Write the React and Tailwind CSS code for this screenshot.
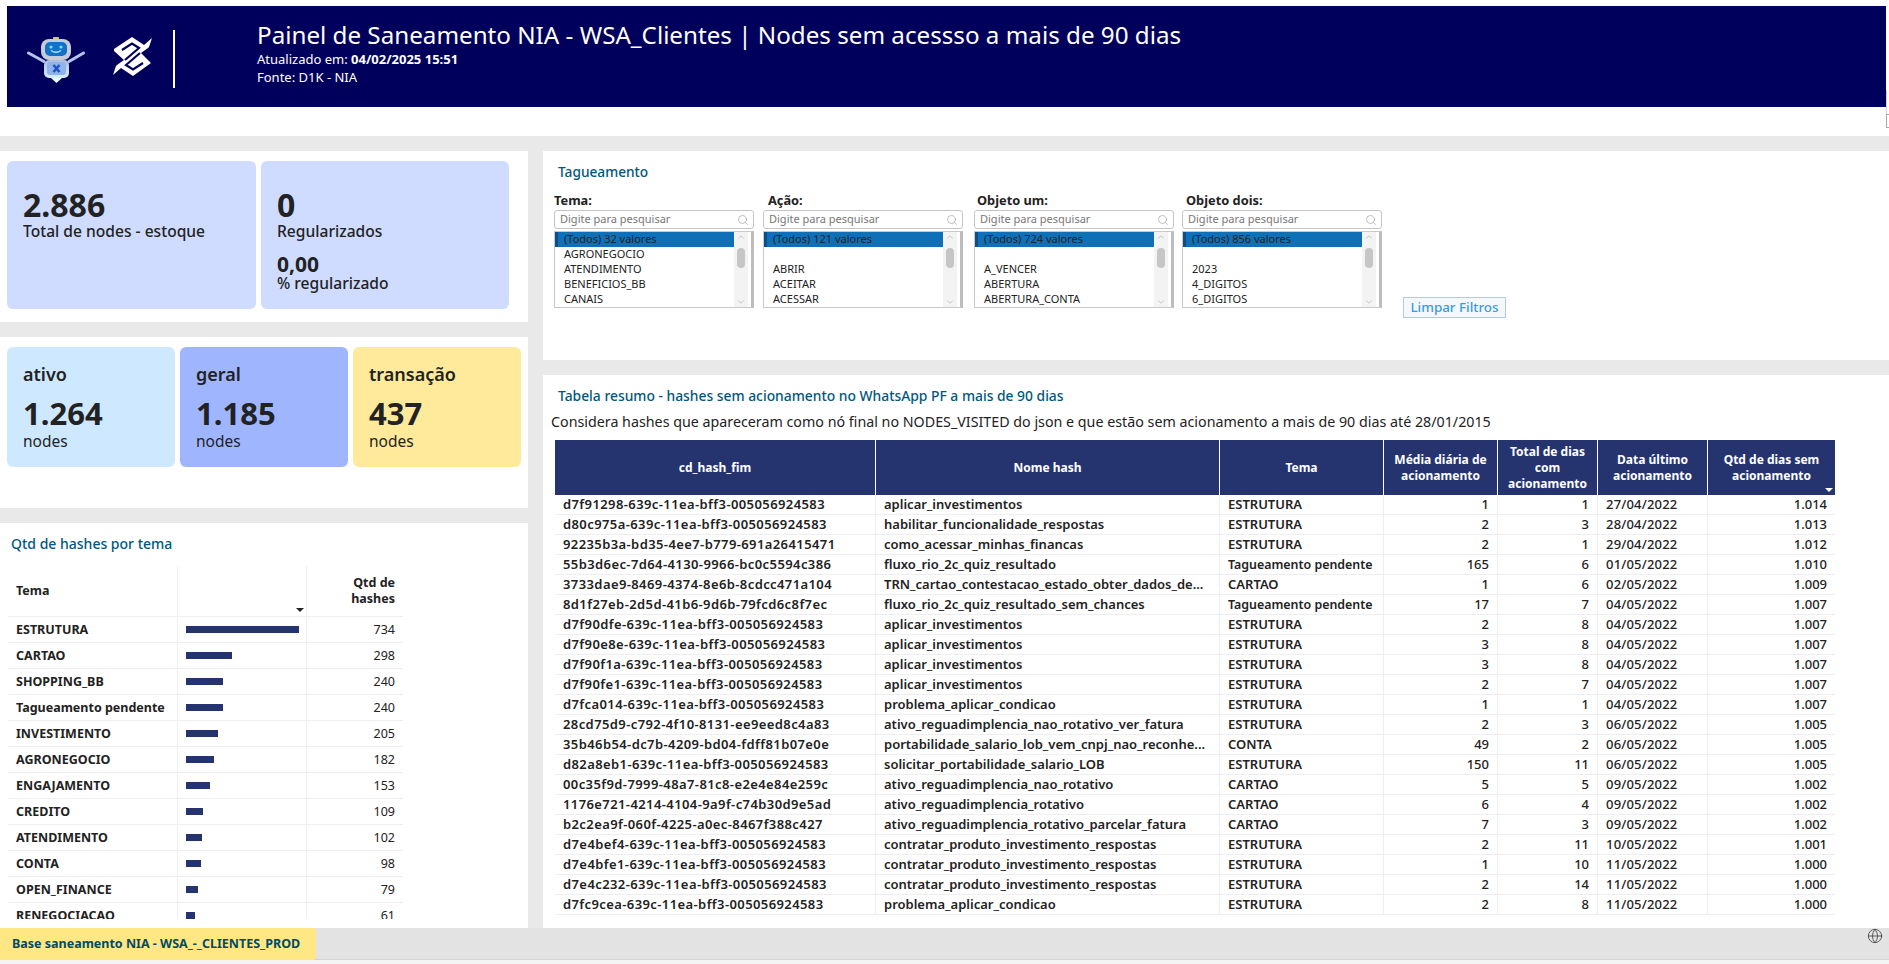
import React from "react";
import { Search, Globe, ChevronUp, ChevronDown } from "lucide-react";

const FONT = "font-['Noto_Sans','Open_Sans',sans-serif]";

function Robot() {
  return (
    <svg width="58" height="46" viewBox="0 0 58 46" className="shrink-0 mt-[7px]">
      <defs>
        <linearGradient id="rb" x1="0" y1="0" x2="0" y2="1">
          <stop offset="0" stopColor="#aebbdc" />
          <stop offset="1" stopColor="#d4f0ff" />
        </linearGradient>
      </defs>
      <path d="M1.5 16 L17 24.5" stroke="#b5c4ee" strokeWidth="3" strokeLinecap="round" />
      <path d="M56.5 16 L42 24.5" stroke="#b5c4ee" strokeWidth="3" strokeLinecap="round" />
      <rect x="26" y="0" width="6" height="3" rx="1" fill="#d8c96a" />
      <rect x="14" y="2" width="30" height="21" rx="8" fill="#c5cbd9" />
      <rect x="18" y="5" width="22" height="14" rx="5" fill="#1470c4" />
      <circle cx="24" cy="10" r="1.6" fill="#7fd8ff" />
      <circle cx="34" cy="10" r="1.6" fill="#7fd8ff" />
      <path d="M24 13.5 q5 3.5 10 0" stroke="#a8e6ff" strokeWidth="1.5" fill="none" />
      <rect x="17" y="23" width="25" height="18" rx="5" fill="url(#rb)" />
      <rect x="20" y="25" width="19" height="13" rx="3" fill="#8fb3ea" />
      <path d="M26.5 28 l6 7 M32.5 28 l-6 7" stroke="#1d55c4" strokeWidth="2.6" />
      <path d="M24 41 h11 l-5.5 5 z" fill="#eef8ff" />
    </svg>
  );
}

function BBLogo() {
  return (
    <svg width="41" height="40" viewBox="0 0 41 40" className="shrink-0">
      <path
        d="M2 12 L20 0 L32 8 L40 1 L37 10 L36 11 L29 16 L39 26 L21 39 L9 31 L1 38 L4 29 L5 28 L12 23 L2 14 Z"
        fill="#fff"
      />
      <path
        d="M10 13 L20 6.5 L27 11 L13 23 M31 26 L21 32.5 L14 28 L28 16"
        fill="none"
        stroke="#00005c"
        strokeWidth="2.2"
      />
    </svg>
  );
}

function Header() {
  return (
    <div className="h-[136px] bg-white pt-[6px] pl-[7px] flex">
      <div className="h-[101px] flex-1 bg-[#00005c] flex items-center text-white">
        <div className="w-[250px] flex items-center pl-[20px] shrink-0">
          <Robot />
          <div className="w-[27px]" />
          <BBLogo />
          <div className="w-[2px] h-[58px] bg-white ml-[20px] mt-[5px]" />
        </div>
        <div className="self-start pt-[13px]">
          <div className="text-[24.2px] leading-[32px]">
            Painel de Saneamento NIA - WSA_Clientes | Nodes sem acessso a mais de 90 dias
          </div>
          <div className="text-[13px] leading-[18px] -mt-[1px]">
            Atualizado em: <b>04/02/2025 15:51</b>
          </div>
          <div className="text-[13px] leading-[18px]">Fonte: D1K - NIA</div>
        </div>
      </div>
      <div className="w-[3px] shrink-0 pt-[84px]">
        <div className="h-[24px] border-l border-[#d4d4d4]" />
        <div className="h-[14px] border-l border-y border-[#a9a9a9]" />
      </div>
    </div>
  );
}

function TopCards() {
  return (
    <div className="h-[171px] bg-white pt-[10px] pl-[7px] flex gap-[5px] text-[#222]">
      <div className="w-[249px] h-[148px] rounded-[6px] bg-[#cfdcff] pl-[16px] pt-[27px]">
        <div className="text-[32px] leading-[34px] font-bold">2.886</div>
        <div className="text-[15.6px] leading-[18px] font-medium">Total de nodes - estoque</div>
      </div>
      <div className="w-[248px] h-[148px] rounded-[6px] bg-[#cfdcff] pl-[16px] pt-[27px]">
        <div className="text-[32px] leading-[34px] font-bold">0</div>
        <div className="text-[15.6px] leading-[18px] font-medium">Regularizados</div>
        <div className="text-[21px] leading-[24px] font-bold mt-[12px]">0,00</div>
        <div className="text-[15.6px] leading-[14px] font-medium">% regularizado</div>
      </div>
    </div>
  );
}

function SmallCard({ title, value, bg }) {
  return (
    <div className={`w-[168px] h-[120px] rounded-[6px] pl-[16px] pt-[15px] ${bg}`}>
      <div className="text-[18px] leading-[24px] font-semibold">{title}</div>
      <div className="text-[31px] leading-[36px] font-bold mt-[9px]">{value}</div>
      <div className="text-[15.5px] leading-[18px] mt-[1px]">nodes</div>
    </div>
  );
}

function SecondCards() {
  return (
    <div className="h-[171px] bg-white pt-[10px] pl-[7px] flex gap-[5px] text-[#222]">
      <SmallCard title="ativo" value="1.264" bg="bg-[#cee9ff]" />
      <SmallCard title="geral" value="1.185" bg="bg-[#9fb6ff]" />
      <SmallCard title="transação" value="437" bg="bg-[#ffe99a]" />
    </div>
  );
}

const temas = [
  ["ESTRUTURA", 734],
  ["CARTAO", 298],
  ["SHOPPING_BB", 240],
  ["Tagueamento pendente", 240],
  ["INVESTIMENTO", 205],
  ["AGRONEGOCIO", 182],
  ["ENGAJAMENTO", 153],
  ["CREDITO", 109],
  ["ATENDIMENTO", 102],
  ["CONTA", 98],
  ["OPEN_FINANCE", 79],
  ["RENEGOCIACAO", 61],
];

function TemaTable() {
  return (
    <div className="h-[405px] bg-white overflow-hidden">
      <div className="pl-[11px] pt-[11px] text-[14px] leading-[20px] text-[#00577f] font-medium">
        Qtd de hashes por tema
      </div>
      <div className="ml-[8px] mt-[12px] w-[395px] h-[353px] overflow-hidden text-[12.5px] text-[#222]">
        <div className="flex h-[51px] border-b border-[#eeeeee]">
          <div className="w-[170px] pl-[8px] flex items-center font-bold border-r border-[#eeeeee]">Tema</div>
          <div className="w-[129px] relative border-r border-[#eeeeee]">
            <div className="absolute right-[2px] bottom-[4px] w-0 h-0 border-x-[4px] border-x-transparent border-t-[4px] border-t-[#222]" />
          </div>
          <div className="w-[96px] pr-[8px] flex items-center justify-end text-right font-bold leading-[16px]">
            Qtd de<br />hashes
          </div>
        </div>
        {temas.map(([name, n]) => (
          <div key={name} className="flex h-[26px] border-b border-[#eeeeee]">
            <div className="w-[170px] pl-[8px] pt-[1px] flex items-center font-bold border-r border-[#eeeeee] whitespace-nowrap">{name}</div>
            <div className="w-[129px] pl-[8px] flex items-center border-r border-[#eeeeee]">
              <div className="h-[7px] bg-[#25346f]" style={{ width: n * 0.154 }} />
            </div>
            <div className="w-[96px] pr-[8px] pt-[1px] flex items-center justify-end">{n}</div>
          </div>
        ))}
      </div>
    </div>
  );
}

function Filter({ label, items, mr, labelPad }) {
  return (
    <div className="shrink-0 w-[200px]" style={{ marginRight: mr }}>
      <div className="text-[12.8px] leading-[16px] font-bold text-[#222] h-[18px]" style={{ paddingLeft: labelPad }}>{label}</div>
      <div className="h-[19px] w-[200px] border border-[#c4c4c4] rounded-[3px] flex items-center justify-between pl-[5px] pr-[4px] text-[11px] text-[#777]">
        <span>Digite para pesquisar</span>
        <Search size={12} strokeWidth={1.25} className="text-[#999]" />
      </div>
      <div className="mt-[2px] h-[77px] w-[200px] border border-[#c9c9c9] border-r-[3px] border-r-[#bdbdbd] flex text-[11px] text-[#222]">
        <div className="w-[179px] shrink-0">
          {items.map((t, i) => (
            <div
              key={i}
              className={`h-[15px] leading-[13px] whitespace-nowrap ${i === 0 ? "bg-[#0f70b7] border-l-[3px] border-l-[#0a4f85] pl-[6px]" : "pl-[9px]"}`}
            >
              {t || "\u00a0"}
            </div>
          ))}
        </div>
        <div className="w-[14px] shrink-0 bg-[#f3f3f3] flex flex-col items-center justify-between">
          <ChevronUp size={10} className="text-[#bbb]" />
          <div className="w-[8px] h-[20px] -mt-[24px] rounded-[4px] bg-[#c6c6c6]" />
          <ChevronDown size={10} className="text-[#bbb]" />
        </div>
      </div>
    </div>
  );
}

function Filters() {
  return (
    <div className="h-[209px] bg-white">
      <div className="pl-[15px] pt-[11px] text-[13.7px] leading-[20px] text-[#00577f] font-medium">Tagueamento</div>
      <div className="flex pl-[11px] mt-[10px]">
        <Filter label="Tema:" labelPad={0} mr={9} items={["(Todos) 32 valores", "AGRONEGOCIO", "ATENDIMENTO", "BENEFICIOS_BB", "CANAIS"]} />
        <Filter label="Ação:" labelPad={5} mr={11} items={["(Todos) 121 valores", "", "ABRIR", "ACEITAR", "ACESSAR"]} />
        <Filter label="Objeto um:" labelPad={3} mr={8} items={["(Todos) 724 valores", "", "A_VENCER", "ABERTURA", "ABERTURA_CONTA"]} />
        <Filter label="Objeto dois:" labelPad={4} mr={21} items={["(Todos) 856 valores", "", "2023", "4_DIGITOS", "6_DIGITOS"]} />
        <div className="self-end mb-[-10px] w-[103px] h-[21px] border border-[#b9c9d6] bg-[#f4f8fb] flex items-center justify-center text-[13.4px] font-medium text-[#3a9be0]">
          Limpar Filtros
        </div>
      </div>
    </div>
  );
}

const rows = [
  ["d7f91298-639c-11ea-bff3-005056924583", "aplicar_investimentos", "ESTRUTURA", "1", "1", "27/04/2022", "1.014"],
  ["d80c975a-639c-11ea-bff3-005056924583", "habilitar_funcionalidade_respostas", "ESTRUTURA", "2", "3", "28/04/2022", "1.013"],
  ["92235b3a-bd35-4ee7-b779-691a26415471", "como_acessar_minhas_financas", "ESTRUTURA", "2", "1", "29/04/2022", "1.012"],
  ["55b3d6ec-7d64-4130-9966-bc0c5594c386", "fluxo_rio_2c_quiz_resultado", "Tagueamento pendente", "165", "6", "01/05/2022", "1.010"],
  ["3733dae9-8469-4374-8e6b-8cdcc471a104", "TRN_cartao_contestacao_estado_obter_dados_de...", "CARTAO", "1", "6", "02/05/2022", "1.009"],
  ["8d1f27eb-2d5d-41b6-9d6b-79fcd6c8f7ec", "fluxo_rio_2c_quiz_resultado_sem_chances", "Tagueamento pendente", "17", "7", "04/05/2022", "1.007"],
  ["d7f90dfe-639c-11ea-bff3-005056924583", "aplicar_investimentos", "ESTRUTURA", "2", "8", "04/05/2022", "1.007"],
  ["d7f90e8e-639c-11ea-bff3-005056924583", "aplicar_investimentos", "ESTRUTURA", "3", "8", "04/05/2022", "1.007"],
  ["d7f90f1a-639c-11ea-bff3-005056924583", "aplicar_investimentos", "ESTRUTURA", "3", "8", "04/05/2022", "1.007"],
  ["d7f90fe1-639c-11ea-bff3-005056924583", "aplicar_investimentos", "ESTRUTURA", "2", "7", "04/05/2022", "1.007"],
  ["d7fca014-639c-11ea-bff3-005056924583", "problema_aplicar_condicao", "ESTRUTURA", "1", "1", "04/05/2022", "1.007"],
  ["28cd75d9-c792-4f10-8131-ee9eed8c4a83", "ativo_reguadimplencia_nao_rotativo_ver_fatura", "ESTRUTURA", "2", "3", "06/05/2022", "1.005"],
  ["35b46b54-dc7b-4209-bd04-fdff81b07e0e", "portabilidade_salario_lob_vem_cnpj_nao_reconhe...", "CONTA", "49", "2", "06/05/2022", "1.005"],
  ["d82a8eb1-639c-11ea-bff3-005056924583", "solicitar_portabilidade_salario_LOB", "ESTRUTURA", "150", "11", "06/05/2022", "1.005"],
  ["00c35f9d-7999-48a7-81c8-e2e4e84e259c", "ativo_reguadimplencia_nao_rotativo", "CARTAO", "5", "5", "09/05/2022", "1.002"],
  ["1176e721-4214-4104-9a9f-c74b30d9e5ad", "ativo_reguadimplencia_rotativo", "CARTAO", "6", "4", "09/05/2022", "1.002"],
  ["b2c2ea9f-060f-4225-a0ec-8467f388c427", "ativo_reguadimplencia_rotativo_parcelar_fatura", "CARTAO", "7", "3", "09/05/2022", "1.002"],
  ["d7e4bef4-639c-11ea-bff3-005056924583", "contratar_produto_investimento_respostas", "ESTRUTURA", "2", "11", "10/05/2022", "1.001"],
  ["d7e4bfe1-639c-11ea-bff3-005056924583", "contratar_produto_investimento_respostas", "ESTRUTURA", "1", "10", "11/05/2022", "1.000"],
  ["d7e4c232-639c-11ea-bff3-005056924583", "contratar_produto_investimento_respostas", "ESTRUTURA", "2", "14", "11/05/2022", "1.000"],
  ["d7fc9cea-639c-11ea-bff3-005056924583", "problema_aplicar_condicao", "ESTRUTURA", "2", "8", "11/05/2022", "1.000"],
];

const cols = "grid grid-cols-[321px_344px_164px_114px_100px_110px_127px]";

function HeadCell({ children, last }) {
  return (
    <div className={`h-full flex items-center justify-center text-center font-bold leading-[16px] px-[4px] ${last ? "" : "border-r border-white"}`}>
      {children}
    </div>
  );
}

function MainTable() {
  return (
    <div className="h-[553px] bg-white overflow-hidden">
      <div className="pl-[15px] pt-[11px] text-[13.85px] leading-[20px] text-[#00577f] font-medium">
        Tabela resumo - hashes sem acionamento no WhatsApp PF a mais de 90 dias
      </div>
      <div className="pl-[8px] mt-[6px] text-[14.27px] leading-[20px] text-[#222]">
        Considera hashes que apareceram como nó final no NODES_VISITED do json e que estão sem acionamento a mais de 90 dias até 28/01/2015
      </div>
      <div className="ml-[12px] mt-[8px] w-[1280px] text-[13px] text-[#222]">
        <div className={`${cols} h-[55px] bg-[#25346f] text-white text-[12px]`}>
          <HeadCell>cd_hash_fim</HeadCell>
          <HeadCell>Nome hash</HeadCell>
          <HeadCell>Tema</HeadCell>
          <HeadCell>Média diária de acionamento</HeadCell>
          <HeadCell>Total de dias com acionamento</HeadCell>
          <HeadCell>Data último acionamento</HeadCell>
          <div className="relative h-full">
            <HeadCell last>Qtd de dias sem acionamento</HeadCell>
            <div className="absolute right-[2px] bottom-[3px] w-0 h-0 border-x-[4px] border-x-transparent border-t-[4px] border-t-white" />
          </div>
        </div>
        {rows.map((r) => (
          <div key={r[0]} className={`${cols} h-[20px] leading-[19px] border-b border-[#eeeeee]`}>
            <div className="pl-[8px] font-semibold tracking-[0.4px] whitespace-nowrap overflow-hidden border-r border-[#eeeeee]">{r[0]}</div>
            <div className="pl-[8px] font-semibold whitespace-nowrap overflow-hidden border-r border-[#eeeeee]">{r[1]}</div>
            <div className={`pl-[8px] font-semibold whitespace-nowrap border-r border-[#eeeeee] ${r[2].startsWith("Tag") ? "text-[12.4px]" : ""}`}>{r[2]}</div>
            <div className="pr-[8px] text-right font-medium border-r border-[#eeeeee]">{r[3]}</div>
            <div className="pr-[8px] text-right font-medium border-r border-[#eeeeee]">{r[4]}</div>
            <div className="pl-[8px] font-medium tracking-[0.2px] border-r border-[#eeeeee]">{r[5]}</div>
            <div className="pr-[8px] text-right font-medium">{r[6]}</div>
          </div>
        ))}
      </div>
    </div>
  );
}

export default function App() {
  return (
    <div className={`w-[1889px] h-[964px] overflow-hidden bg-[#f4f4f4] flex flex-col ${FONT}`}>
      <Header />
      <div className="h-[792px] bg-[#e9e9e9] pt-[15px] flex gap-[15px]">
        <div className="w-[528px] flex flex-col gap-[15px] shrink-0">
          <TopCards />
          <SecondCards />
          <TemaTable />
        </div>
        <div className="flex-1 flex flex-col gap-[15px]">
          <Filters />
          <MainTable />
        </div>
      </div>
      <div className="h-[32px] bg-[#e3e3e3] border-b border-[#d4d4d4] flex justify-between items-start">
        <div className="w-[316px] h-[32px] bg-[#ffe884] rounded-r-[3px] pl-[12px] flex items-center text-[12.5px] font-bold text-[#004a66]">
          Base saneamento NIA - WSA_-_CLIENTES_PROD
        </div>
        <Globe size={16} strokeWidth={1.25} className="text-[#444] mr-[6px]" />
      </div>
    </div>
  );
}
